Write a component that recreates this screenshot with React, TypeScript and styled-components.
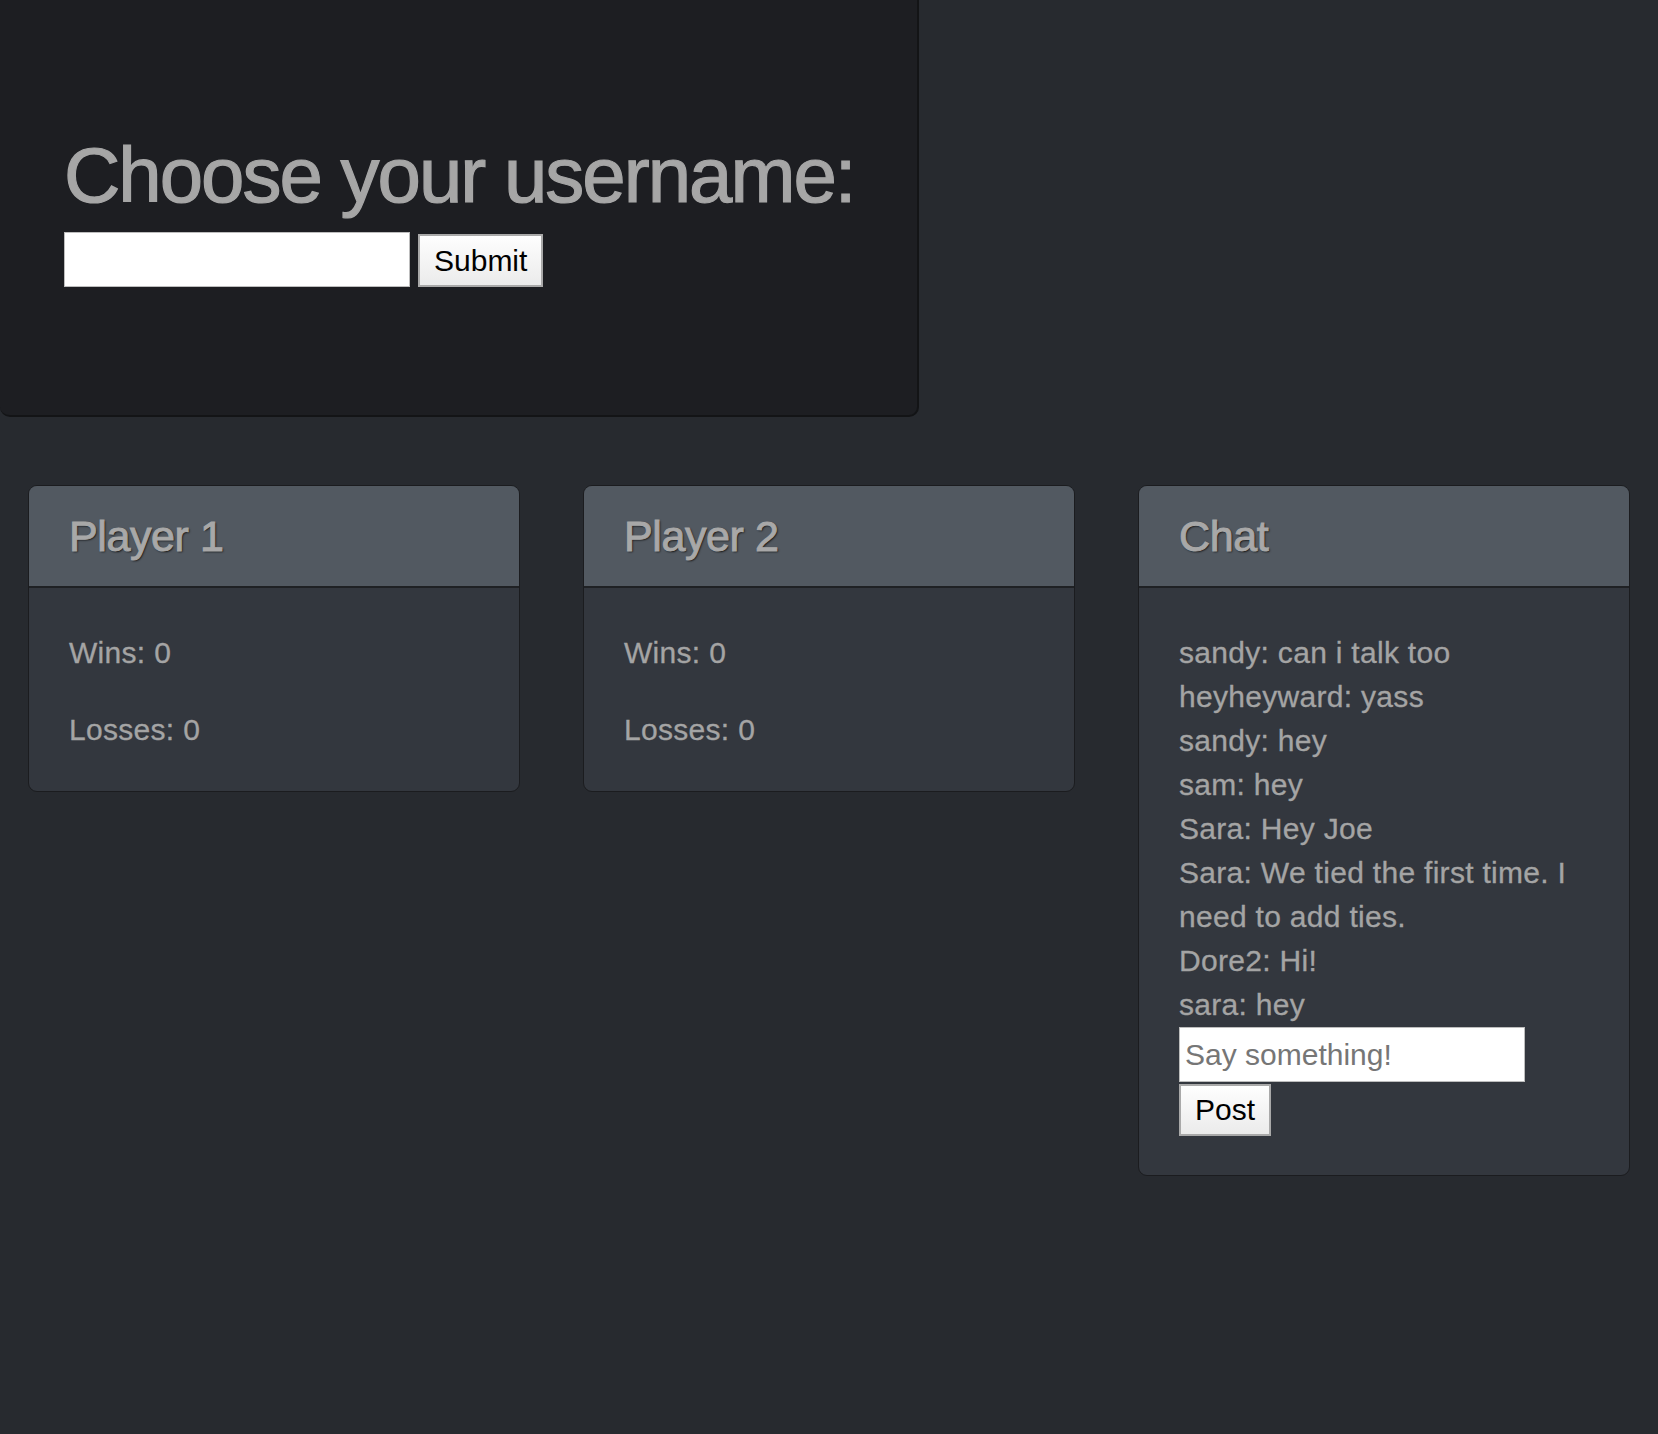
import React, { useState } from 'react';
import styled, { createGlobalStyle } from 'styled-components';

interface ChatMessage {
  sender: string;
  text: string;
}

interface PlayerStats {
  name: string;
  wins: number;
  losses: number;
}

const GlobalStyle = createGlobalStyle`
  html, body {
    margin: 0;
    padding: 0;
    background: #272a2f;
  }
  body {
    font-family: "Liberation Sans", Arial, Helvetica, sans-serif;
    color: #a4a4a4;
  }
`;

const initialMessages: ChatMessage[] = [
  { sender: 'sandy', text: 'can i talk too' },
  { sender: 'heyheyward', text: 'yass' },
  { sender: 'sandy', text: 'hey' },
  { sender: 'sam', text: 'hey' },
  { sender: 'Sara', text: 'Hey Joe' },
  { sender: 'Sara', text: 'We tied the first time. I need to add ties.' },
  { sender: 'Dore2', text: 'Hi!' },
  { sender: 'sara', text: 'hey' },
];

const players: PlayerStats[] = [
  { name: 'Player 1', wins: 0, losses: 0 },
  { name: 'Player 2', wins: 0, losses: 0 },
];

const App: React.FC = () => {
  const [username, setUsername] = useState<string>('');
  const [draft, setDraft] = useState<string>('');
  const [messages, setMessages] = useState<ChatMessage[]>(initialMessages);

  const handlePost = () => {
    if (draft.trim()) {
      setMessages((prev) => [...prev, { sender: username || 'guest', text: draft }]);
      setDraft('');
    }
  };

  return (
    <Page>
      <GlobalStyle />
      <Jumbotron>
        <Title>Choose your username:</Title>
        <FormRow onSubmit={(e) => e.preventDefault()}>
          <TextInput
            type="text"
            value={username}
            onChange={(e) => setUsername(e.target.value)}
          />
          <PlainButton type="submit" tall>
            Submit
          </PlainButton>
        </FormRow>
      </Jumbotron>

      <CardRow>
        {players.map((p) => (
          <Card key={p.name}>
            <CardHeader>
              <CardTitle>{p.name}</CardTitle>
            </CardHeader>
            <CardBody>
              <Stat>Wins: {p.wins}</Stat>
              <Stat>Losses: {p.losses}</Stat>
            </CardBody>
          </Card>
        ))}

        <Card>
          <CardHeader>
            <CardTitle>Chat</CardTitle>
          </CardHeader>
          <CardBody>
            <ChatLog>
              {messages.map((msg, index) => (
                <ChatLine key={index}>
                  {msg.sender}: {msg.text}
                </ChatLine>
              ))}
            </ChatLog>
            <TextInput
              type="text"
              placeholder="Say something!"
              value={draft}
              onChange={(e) => setDraft(e.target.value)}
            />
            <PostButton type="button" onClick={handlePost}>
              Post
            </PostButton>
          </CardBody>
        </Card>
      </CardRow>
    </Page>
  );
};

const Page = styled.div`
  min-height: 100vh;
  background: #272a2f;
`;

const Jumbotron = styled.div`
  box-sizing: border-box;
  width: 919px;
  padding: 128px 64px 128px 64px;
  background: #1d1e22;
  border: 2px solid #131416;
  border-top: none;
  border-left: none;
  border-radius: 0 0 10px 10px;
`;

const Title = styled.h1`
  margin: 0 0 10px;
  font-size: 78px;
  line-height: 94px;
  font-weight: 400;
  letter-spacing: -2px;
  white-space: nowrap;
  color: #a6a6a6;
  -webkit-text-stroke: 1.2px #a6a6a6;
`;

const FormRow = styled.form`
  display: flex;
  align-items: flex-end;
  gap: 8px;
`;

const TextInput = styled.input`
  display: block;
  box-sizing: border-box;
  width: 346px;
  height: 55px;
  margin: 0;
  padding: 0 5px;
  border: 1px solid #bdbdbd;
  background: #fff;
  font-family: "Liberation Sans", Arial, sans-serif;
  font-size: 30px;
  color: #222;
  outline: none;
  &::placeholder {
    color: #767676;
  }
`;

const PlainButton = styled.button<{ tall?: boolean }>`
  box-sizing: border-box;
  height: ${(props) => (props.tall ? '53px' : '52px')};
  margin: 0;
  padding: 0 14px;
  border: 2px solid #a9a9a9;
  border-radius: 0;
  background: linear-gradient(#fefefe, #ebebeb);
  font-family: "Liberation Sans", Arial, sans-serif;
  font-size: 30px;
  color: #000;
  cursor: pointer;
`;

const PostButton = styled(PlainButton)`
  display: block;
  margin-top: 2px;
`;

const CardRow = styled.div`
  display: grid;
  grid-template-columns: repeat(3, 1fr);
  gap: 63px;
  align-items: start;
  padding: 68px 28px 0;
`;

const Card = styled.div`
  background: #33373e;
  border: 1px solid #1b1c1f;
  border-radius: 9px;
  overflow: hidden;
`;

const CardHeader = styled.div`
  padding: 24px 40px;
  background: #525961;
  border-bottom: 2px solid #1f2124;
`;

const CardTitle = styled.h3`
  margin: 0;
  font-size: 43px;
  line-height: 52px;
  font-weight: 400;
  letter-spacing: -0.4px;
  color: #a8a8a8;
  -webkit-text-stroke: 1px #a8a8a8;
  text-shadow: 1px 1px 2px rgba(0, 0, 0, 0.85);
`;

const CardBody = styled.div`
  padding: 43px 40px 39px;
`;

const Stat = styled.p`
  margin: 0 0 33px;
  font-size: 30px;
  line-height: 44px;
  letter-spacing: 0.3px;
  color: #a4a4a4;
  -webkit-text-stroke: 0.3px #a4a4a4;
  &:last-child {
    margin-bottom: 0;
  }
`;

const ChatLog = styled.div`
  display: flex;
  flex-direction: column;
`;

const ChatLine = styled.div`
  font-size: 30px;
  line-height: 44px;
  letter-spacing: 0.3px;
  color: #a4a4a4;
  -webkit-text-stroke: 0.3px #a4a4a4;
`;

export default App;
